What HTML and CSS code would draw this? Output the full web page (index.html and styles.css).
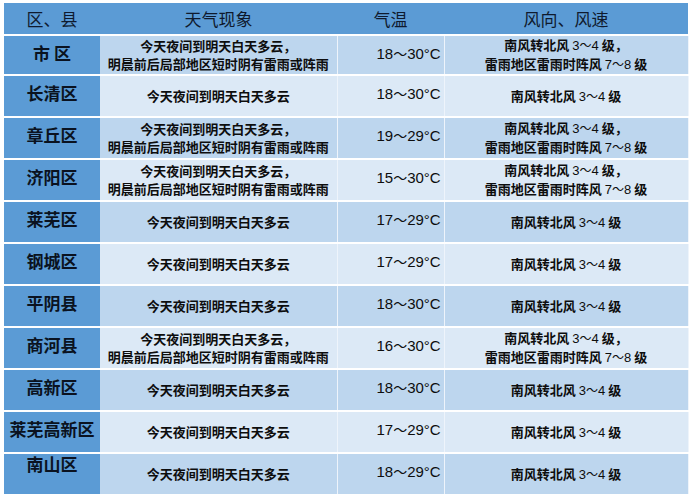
FILE: index.html
```html
<!DOCTYPE html>
<html lang="zh-CN">
<head>
<meta charset="utf-8">
<title>天气预报</title>
<link rel="stylesheet" href="styles.css">
</head>
<body>
<table class="wx">
  <colgroup>
    <col class="c-area"><col class="c-sky"><col class="c-temp"><col class="c-wind">
  </colgroup>
  <thead>
    <tr><th>区、县</th><th>天气现象</th><th>气温</th><th>风向、风速</th></tr>
  </thead>
  <tbody>
    <tr class="dark first">
      <td class="area">市&nbsp;区</td>
      <td class="sky">今天夜间到明天白天多云，<br>明晨前后局部地区短时阴有雷雨或阵雨</td>
      <td class="temp">18<span class="til">～</span>30°C</td>
      <td class="wind">南风转北风 <span class="num">3<span class="til">～</span>4</span> 级，<br>雷雨地区雷雨时阵风 <span class="num">7<span class="til">～</span>8</span> 级</td>
    </tr>
    <tr class="light">
      <td class="area">长清区</td>
      <td class="sky">今天夜间到明天白天多云</td>
      <td class="temp">18<span class="til">～</span>30°C</td>
      <td class="wind">南风转北风 <span class="num">3<span class="til">～</span>4</span> 级</td>
    </tr>
    <tr class="dark">
      <td class="area">章丘区</td>
      <td class="sky">今天夜间到明天白天多云，<br>明晨前后局部地区短时阴有雷雨或阵雨</td>
      <td class="temp">19<span class="til">～</span>29°C</td>
      <td class="wind">南风转北风 <span class="num">3<span class="til">～</span>4</span> 级，<br>雷雨地区雷雨时阵风 <span class="num">7<span class="til">～</span>8</span> 级</td>
    </tr>
    <tr class="light">
      <td class="area">济阳区</td>
      <td class="sky">今天夜间到明天白天多云，<br>明晨前后局部地区短时阴有雷雨或阵雨</td>
      <td class="temp">15<span class="til">～</span>30°C</td>
      <td class="wind">南风转北风 <span class="num">3<span class="til">～</span>4</span> 级，<br>雷雨地区雷雨时阵风 <span class="num">7<span class="til">～</span>8</span> 级</td>
    </tr>
    <tr class="dark">
      <td class="area">莱芜区</td>
      <td class="sky">今天夜间到明天白天多云</td>
      <td class="temp">17<span class="til">～</span>29°C</td>
      <td class="wind">南风转北风 <span class="num">3<span class="til">～</span>4</span> 级</td>
    </tr>
    <tr class="light">
      <td class="area">钢城区</td>
      <td class="sky">今天夜间到明天白天多云</td>
      <td class="temp">17<span class="til">～</span>29°C</td>
      <td class="wind">南风转北风 <span class="num">3<span class="til">～</span>4</span> 级</td>
    </tr>
    <tr class="dark">
      <td class="area">平阴县</td>
      <td class="sky">今天夜间到明天白天多云</td>
      <td class="temp">18<span class="til">～</span>30°C</td>
      <td class="wind">南风转北风 <span class="num">3<span class="til">～</span>4</span> 级</td>
    </tr>
    <tr class="light">
      <td class="area">商河县</td>
      <td class="sky">今天夜间到明天白天多云，<br>明晨前后局部地区短时阴有雷雨或阵雨</td>
      <td class="temp">16<span class="til">～</span>30°C</td>
      <td class="wind">南风转北风 <span class="num">3<span class="til">～</span>4</span> 级，<br>雷雨地区雷雨时阵风 <span class="num">7<span class="til">～</span>8</span> 级</td>
    </tr>
    <tr class="dark">
      <td class="area">高新区</td>
      <td class="sky">今天夜间到明天白天多云</td>
      <td class="temp">18<span class="til">～</span>30°C</td>
      <td class="wind">南风转北风 <span class="num">3<span class="til">～</span>4</span> 级</td>
    </tr>
    <tr class="light">
      <td class="area">莱芜高新区</td>
      <td class="sky">今天夜间到明天白天多云</td>
      <td class="temp">17<span class="til">～</span>29°C</td>
      <td class="wind">南风转北风 <span class="num">3<span class="til">～</span>4</span> 级</td>
    </tr>
    <tr class="dark">
      <td class="area area-high">南山区</td>
      <td class="sky">今天夜间到明天白天多云</td>
      <td class="temp">18<span class="til">～</span>29°C</td>
      <td class="wind">南风转北风 <span class="num">3<span class="til">～</span>4</span> 级</td>
    </tr>
  </tbody>
</table>
</body>
</html>
```

FILE: styles.css
```css
html, body {
  margin: 0;
  padding: 0;
  background: #ffffff;
}

body {
  padding: 3px 0 0 4px;
  font-family: "Noto Sans CJK SC", "Liberation Sans", sans-serif;
  color: #0d0d0d;
}

.wx {
  border-collapse: collapse;
  table-layout: fixed;
  width: 684px;
}

.c-area { width: 96px; }
.c-sky { width: 237px; }
.c-temp { width: 107px; }
.c-wind { width: 244px; }

.wx th {
  height: 32px;
  padding: 0;
  background: #5b9bd5;
  color: #0f1a2e;
  font-size: 17px;
  font-weight: 400;
  line-height: 20px;
  text-align: center;
  vertical-align: middle;
  border-bottom: 2px solid #ffffff;
  box-sizing: border-box;
}

.wx td {
  height: 42px;
  padding: 0;
  border-bottom: 2px solid #ffffff;
  border-right: 1px solid #eef4fb;
  text-align: center;
  vertical-align: middle;
  box-sizing: border-box;
}

.wx tr.first td {
  height: 40px;
}

.wx tr.dark td { background: #bdd6ee; }
.wx tr.light td { background: #dce9f6; }

.wx tr td.area {
  background: #5b9bd5;
  border-right: none;
  font-size: 17px;
  font-weight: 700;
  line-height: 20px;
  color: #0a1220;
  vertical-align: top;
  padding-top: 7px;
}

.wx tr td.area-high {
  padding-top: 0;
}

.sky, .wind {
  font-size: 13px;
  font-weight: 700;
  line-height: 18px;
}

.wx td.temp {
  font-family: "Liberation Sans", "Noto Sans CJK SC", sans-serif;
  font-size: 15px;
  font-weight: 400;
  line-height: 18px;
  text-align: left;
  padding-left: 39px;
  vertical-align: top;
  padding-top: 8px;
}

.til {
  font-family: "Noto Sans CJK SC", sans-serif;
  font-weight: 400;
  font-size: 14px;
}

.num {
  font-family: "Liberation Sans", sans-serif;
  font-weight: 400;
}

.wind .til {
  font-size: 12px;
}
```
